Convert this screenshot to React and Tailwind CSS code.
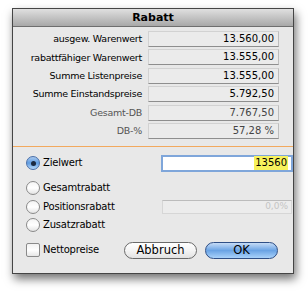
import React from "react";

const font = { fontFamily: '"DejaVu Sans", "Liberation Sans", sans-serif' };

function Row({ label, value, dim }) {
  return (
    <div className="flex items-center h-[16px]">
      <div className={`w-[129px] text-right text-[9.5px] tracking-[-0.25px] leading-none whitespace-nowrap ${dim ? "text-[#555]" : "text-black"}`}>
        {label}
      </div>
      <div className={`ml-[6px] w-[131px] h-[16px] bg-[#ebebeb] border border-[#d2d2d2] border-b-[#8e8e8e] border-r-[#bdbdbd] flex items-center justify-end pr-[4px] text-[10px] leading-none ${dim ? "text-[#444]" : "text-black"}`}>
        {value}
      </div>
    </div>
  );
}

function Radio({ checked }) {
  if (checked) {
    return (
      <div className="w-[14px] h-[14px] rounded-full border border-[#4a6fa8] bg-gradient-to-b from-[#a9c9ee] via-[#5e9be0] to-[#b6d8f8] flex items-center justify-center shrink-0">
        <div className="w-[5px] h-[5px] rounded-full bg-[#1b2a40]" />
      </div>
    );
  }
  return (
    <div className="w-[14px] h-[14px] rounded-full border border-[#8a8a8a] bg-gradient-to-b from-[#f4f4f4] via-[#ffffff] to-[#e4e4e4] shrink-0" />
  );
}

export default function App() {
  return (
    <div className="w-[308px] h-[291px] bg-white pt-[8px] pl-[12px]" style={font}>
      <div className="w-[282px] h-[266px] border border-[#454545] bg-[#e8e8e8] shadow-[2px_5px_9px_rgba(0,0,0,0.55)] flex flex-col">
        <div className="h-[18px] bg-gradient-to-b from-[#e0e0e0] to-[#a8a8a8] border-b border-[#6e6e6e] flex items-center justify-center text-[11px] font-bold text-black leading-none">
          Rabatt
        </div>
        <div className="flex flex-col pt-[4px]">
          <div className="flex flex-col gap-[2.4px]">
            <Row label="ausgew. Warenwert" value="13.560,00" />
            <Row label="rabattfähiger Warenwert" value="13.555,00" />
            <Row label="Summe Listenpreise" value="13.555,00" />
            <Row label="Summe Einstandspreise" value="5.792,50" />
            <Row label="Gesamt-DB" value="7.767,50" dim />
            <Row label="DB-%" value="57,28 %" dim />
          </div>
          <div className="mt-[7px] h-px bg-[#f2a95e]" />
          <div className="mt-[8px] flex items-center h-[17px] pl-[13px]">
            <Radio checked />
            <span className="ml-[3px] text-[10px] tracking-[-0.2px] leading-none text-black w-[116px]">Zielwert</span>
            <div className="ml-[2px] w-[132px] h-[17px] bg-white border-2 border-[#7fa6da] flex items-center justify-end pr-[3px]">
              <span className="bg-[#f7f25c] text-[10px] leading-none px-[1px] py-[2px]">13560</span>
            </div>
          </div>
          <div className="mt-[8px] flex items-center h-[16px] pl-[13px]">
            <Radio />
            <span className="ml-[3px] text-[10px] tracking-[-0.2px] leading-none text-black">Gesamtrabatt</span>
          </div>
          <div className="mt-[4px] flex items-center h-[14px] pl-[13px]">
            <Radio />
            <span className="ml-[3px] text-[10px] tracking-[-0.2px] leading-none text-black w-[119px]">Positionsrabatt</span>
            <div className="w-[130px] h-[14px] bg-[#ececec] border border-[#d6d6d6] border-t-[#bcbcbc] flex items-center justify-end pr-[3px] text-[9px] leading-none text-[#c4c4c4]">
              0,0%
            </div>
          </div>
          <div className="mt-[3px] flex items-center h-[16px] pl-[13px]">
            <Radio />
            <span className="ml-[3px] text-[10px] tracking-[-0.2px] leading-none text-black">Zusatzrabatt</span>
          </div>
          <div className="mt-[9px] flex items-center h-[17px] pl-[13px]">
            <div className="w-[14px] h-[14px] rounded-[2px] border border-[#8a8a8a] bg-gradient-to-b from-[#f2f2f2] via-white to-[#e6e6e6] shrink-0" />
            <span className="ml-[3px] text-[10px] tracking-[-0.2px] leading-none text-black w-[81px]">Nettopreise</span>
            <div className="w-[73px] h-[17px] rounded-full border border-[#6a6a6a] bg-gradient-to-b from-white via-[#f4f4f4] to-[#e2e2e2] flex items-center justify-center text-[11.5px] leading-none text-black">
              Abbruch
            </div>
            <div className="ml-[8px] w-[73px] h-[17px] rounded-full border border-[#2f4f86] bg-gradient-to-b from-[#c6dcf6] via-[#6aa3e4] to-[#a9d2fa] flex items-center justify-center text-[11.5px] leading-none text-black">
              OK
            </div>
          </div>
        </div>
      </div>
    </div>
  );
}
